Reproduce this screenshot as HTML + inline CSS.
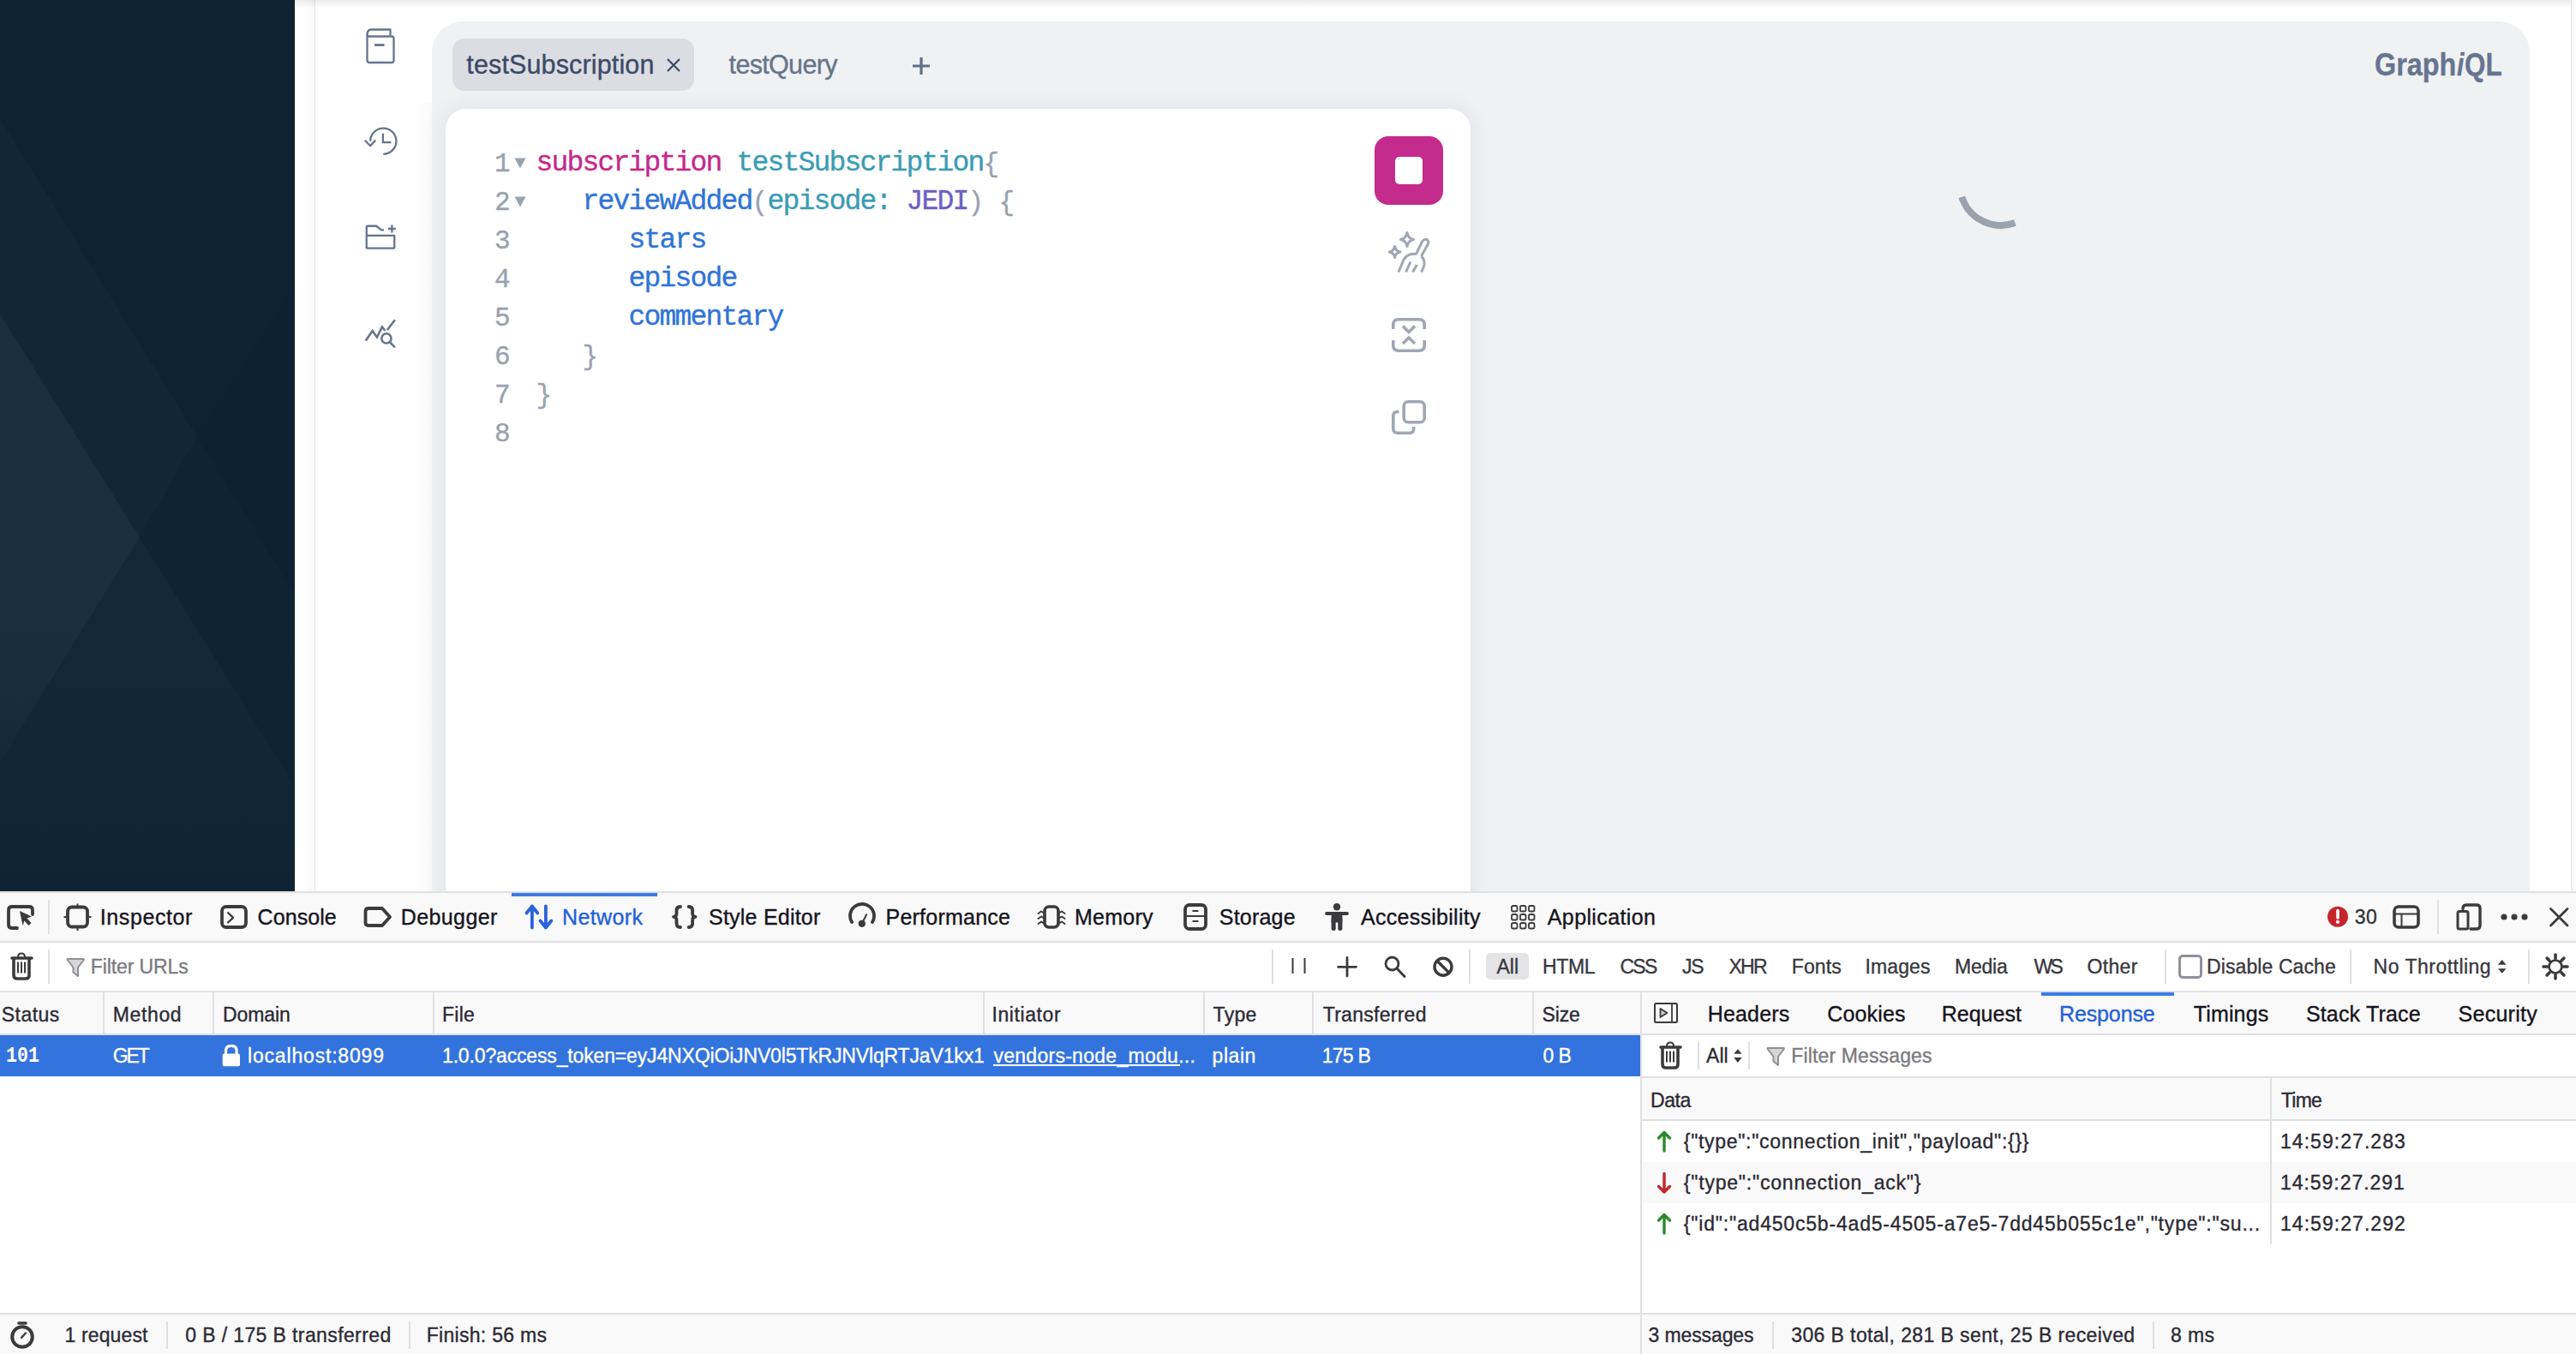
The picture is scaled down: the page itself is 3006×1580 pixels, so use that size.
<!DOCTYPE html>
<html><head><meta charset="utf-8"><style>
html,body{margin:0;padding:0;}
body{width:3006px;height:1580px;position:relative;overflow:hidden;background:#fff;font-family:'Liberation Sans',sans-serif;}
.t{position:absolute;white-space:pre;-webkit-text-stroke:0.35px currentColor;}
svg{overflow:visible}
</style></head><body>
<svg style="position:absolute;left:0;top:0" width="344" height="1040" viewBox="0 0 344 1040">
<defs><linearGradient id="dk" x1="0" y1="0" x2="0" y2="1"><stop offset="0" stop-color="#0f2334"/><stop offset="1" stop-color="#0f2334"/></linearGradient>
<linearGradient id="fade" x1="0" y1="0" x2="0" y2="1"><stop offset="0.3" stop-color="#0e2232" stop-opacity="0"/><stop offset="1" stop-color="#0e2232" stop-opacity="0.85"/></linearGradient></defs>
<rect width="344" height="1040" fill="#0f2435"/>
<polygon points="0,0 344,0 344,693 0,138" fill="#0e2232"/>
<polygon points="0,138 344,693 344,917 0,366" fill="#112636"/>
<polygon points="344,333 344,693 230,510" fill="#0e2132"/>
<polygon points="0,366 163,627 0,890" fill="#1a2f3e"/>
<polygon points="0,890 163,627 344,917 344,1040 0,1040" fill="#142937"/>
<polygon points="230,510 344,693 344,917 163,627" fill="#0f2433"/>
<rect y="600" width="344" height="440" fill="url(#fade)"/>
</svg>
<div style="position:absolute;left:344px;top:0px;width:23px;height:1040px;background:linear-gradient(90deg,#ffffff 40%,#f8f8f8);"></div>
<div style="position:absolute;left:367px;top:0px;width:1px;height:1040px;background:#e6e6e6;"></div>
<div style="position:absolute;left:344px;top:0px;width:2662px;height:10px;background:linear-gradient(#00000012,#00000000);"></div>
<div style="position:absolute;left:3000px;top:0px;width:1px;height:1040px;background:#e6e6e6;"></div>
<div style="position:absolute;left:3001px;top:0px;width:5px;height:1040px;background:linear-gradient(90deg,#f3f3f3,#fdfdfd);"></div>
<div style="position:absolute;left:484px;top:120px;width:20px;height:920px;background:linear-gradient(90deg,rgba(0,0,0,0),rgba(0,0,0,0.025));"></div>
<div style="position:absolute;left:504px;top:25px;width:2448px;height:1100px;background:#f0f1f3;border-radius:36px;"></div>
<div style="position:absolute;left:528px;top:45px;width:282px;height:61px;background:#dcdde2;border-radius:14px;"></div>
<svg style="position:absolute;left:778px;top:68px;" width="16" height="16" viewBox="0 0 16 16" fill="none"><path d="M1 1L15 15M15 1L1 15" stroke="#3b4a68" stroke-width="2.2"/></svg>
<svg style="position:absolute;left:1065px;top:67px;" width="20" height="20" viewBox="0 0 20 20" fill="none"><path d="M10 0V20M0 10H20" stroke="#616e86" stroke-width="3.2"/></svg>
<svg style="position:absolute;left:2280px;top:160px" width="110" height="110" viewBox="2280 160 110 110" fill="none">
<path d="M 2289.3 229.9 A 48 48 0 0 0 2351.4 260.1" stroke="#9aa1af" stroke-width="8"/></svg>
<div style="position:absolute;left:520px;top:127px;width:1196px;height:1000px;background:#ffffff;border-radius:24px;box-shadow:0 0 24px rgba(59,74,104,0.10);"></div>
<svg style="position:absolute;left:600px;top:183px;" width="14" height="14" viewBox="0 0 14 14" fill="none"><path d="M0.5 1.5H13.5L7 13.5Z" fill="#9aa1ae"/></svg>
<svg style="position:absolute;left:600px;top:228px;" width="14" height="14" viewBox="0 0 14 14" fill="none"><path d="M0.5 1.5H13.5L7 13.5Z" fill="#9aa1ae"/></svg>
<div style="position:absolute;left:1604px;top:159px;width:80px;height:80px;background:#c42b8c;border-radius:16px;"></div>
<div style="position:absolute;left:1628px;top:183px;width:32px;height:32px;background:#ffffff;border-radius:5px;"></div>
<svg style="position:absolute;left:1610px;top:260px;" width="80" height="80" viewBox="0 0 80 80" fill="none"><g stroke="#a0a6b3" stroke-width="3" stroke-linejoin="round" stroke-linecap="butt">
<path d="M32 11.5 Q33.2 18.3 39.5 19.5 Q33.2 20.7 32 27.5 Q30.8 20.7 24.5 19.5 Q30.8 18.3 32 11.5Z"/>
<path d="M17.6 27.5 Q18.6 33 24 34 Q18.6 35 17.6 40.5 Q16.6 35 11.2 34 Q16.6 33 17.6 27.5Z"/>
<path d="M42.5 36.5 L49.5 22 Q52 18.5 55 19.5 Q57.5 21 56.5 24.5 L48.5 39"/>
<path d="M42.5 36.5 Q37 35.5 32 38.5 Q29.5 40.5 28 43 L22 57.5"/>
<path d="M48.5 39 Q52.5 42.5 52 48.5 Q51.5 52.5 48.5 57.5"/>
<path d="M36 45.5 L30.5 57.5 M43.5 49 L38.5 57.5"/></g></svg>
<svg style="position:absolute;left:1624px;top:371px;" width="40" height="40" viewBox="0 0 40 40" fill="none"><g stroke="#a0a6b3" stroke-width="3.6" fill="none">
<path d="M1.8 13V8Q1.8 1.8 8 1.8H32Q38.2 1.8 38.2 8V13"/>
<path d="M1.8 26V32Q1.8 38.2 8 38.2H32Q38.2 38.2 38.2 32V26"/>
<path d="M13 9.5L20 16.5L27 9.5M13 30L20 23L27 30"/></g></svg>
<svg style="position:absolute;left:1624px;top:467px;" width="40" height="40" viewBox="0 0 40 40" fill="none"><g stroke="#a0a6b3" stroke-width="3.6" fill="none">
<rect x="14.2" y="1.8" width="24" height="24" rx="5"/>
<path d="M8.5 13.5H6.5Q1.8 13.5 1.8 18.5V33Q1.8 38.2 7 38.2H21Q25.6 38.2 25.6 33.5V31"/></g></svg>
<svg style="position:absolute;left:426px;top:33px;" width="36" height="42" viewBox="0 0 36 42" fill="none"><g stroke="#66748c" stroke-width="2.3" fill="none" stroke-linejoin="round">
<path d="M2.5 8 Q2.5 1.5 7 1.5 H29.5 V8.5"/>
<path d="M2.5 8 Q2.5 9.5 5 9.5 H31 Q33.5 9.5 33.5 12 V37.5 Q33.5 40 31 40 H5 Q2.5 40 2.5 37.5 Z"/>
<path d="M11 19.5H22.5" stroke-width="2.8"/></g></svg>
<svg style="position:absolute;left:424px;top:147px;" width="40" height="36" viewBox="0 0 40 36" fill="none"><g stroke="#66748c" stroke-width="2.3" fill="none">
<path d="M8.2 17.7 A15.1 15.1 0 1 1 23.3 32.8"/>
<path d="M1.8 16.8 L8.1 23.2 L14.2 16.6"/>
<path d="M22.9 8.8V19.2H32.5"/></g></svg>
<svg style="position:absolute;left:426px;top:262px;" width="37" height="30" viewBox="0 0 37 30" fill="none"><g stroke="#66748c" stroke-width="2.3" fill="none" stroke-linejoin="round">
<path d="M1.75 27.65V3.2Q1.75 1.75 3.2 1.75H13.2L19 6.3H22"/>
<path d="M1.75 12.8H34.25V26.2Q34.25 27.65 32.8 27.65H3.2Q1.75 27.65 1.75 26.2"/>
<path d="M31.4 0.6V9.4M27 5H35.8"/></g></svg>
<svg style="position:absolute;left:426px;top:372px;" width="37" height="35" viewBox="0 0 37 35" fill="none"><g stroke="#66748c" stroke-width="2.6" fill="none">
<path d="M0.8 25.6L8.6 14L13.9 21.5L19.9 9.5L23.5 14"/>
<path d="M25.9 13L34.9 1.2"/>
<circle cx="24.9" cy="22.9" r="5.6"/>
<path d="M29 27.3L34.9 33.4"/></g></svg>
<div style="position:absolute;left:0px;top:1040px;width:3006px;height:540px;background:#ffffff;"></div>
<div style="position:absolute;left:0px;top:1040px;width:3006px;height:2px;background:#e0e0e2;"></div>
<div style="position:absolute;left:0px;top:1042px;width:3006px;height:56px;background:#f9f9fa;"></div>
<div style="position:absolute;left:0px;top:1098px;width:3006px;height:2px;background:#e0e0e2;"></div>
<div style="position:absolute;left:0px;top:1156px;width:3006px;height:2px;background:#e0e0e2;"></div>
<div style="position:absolute;left:0px;top:1158px;width:3006px;height:48px;background:#f9f9fa;"></div>
<div style="position:absolute;left:0px;top:1206px;width:3006px;height:2px;background:#e0e0e2;"></div>
<div style="position:absolute;left:0px;top:1208px;width:1914px;height:48px;background:#3373dd;"></div>
<div style="position:absolute;left:0px;top:1532px;width:3006px;height:2px;background:#e0e0e2;"></div>
<div style="position:absolute;left:0px;top:1534px;width:3006px;height:46px;background:#f9f9fa;"></div>
<div style="position:absolute;left:1914px;top:1158px;width:2px;height:422px;background:#e0e0e2;"></div>
<div style="position:absolute;left:1916px;top:1208px;width:1090px;height:48px;background:#ffffff;"></div>
<div style="position:absolute;left:1916px;top:1256px;width:1090px;height:2px;background:#e0e0e2;"></div>
<div style="position:absolute;left:1916px;top:1258px;width:1090px;height:48px;background:#f9f9fa;"></div>
<div style="position:absolute;left:1916px;top:1306px;width:1090px;height:2px;background:#e0e0e2;"></div>
<div style="position:absolute;left:1916px;top:1356px;width:1090px;height:48px;background:#f9f9fa;"></div>
<div style="position:absolute;left:2649px;top:1258px;width:2px;height:194px;background:#e0e0e2;"></div>
<div style="position:absolute;left:1916px;top:1532px;width:1090px;height:2px;background:#e0e0e2;"></div>
<div style="position:absolute;left:1916px;top:1534px;width:1090px;height:46px;background:#f9f9fa;"></div>
<div style="position:absolute;left:120px;top:1158px;width:2px;height:48px;background:#e0e0e2;"></div>
<div style="position:absolute;left:248px;top:1158px;width:2px;height:48px;background:#e0e0e2;"></div>
<div style="position:absolute;left:505px;top:1158px;width:2px;height:48px;background:#e0e0e2;"></div>
<div style="position:absolute;left:1147px;top:1158px;width:2px;height:48px;background:#e0e0e2;"></div>
<div style="position:absolute;left:1404px;top:1158px;width:2px;height:48px;background:#e0e0e2;"></div>
<div style="position:absolute;left:1531px;top:1158px;width:2px;height:48px;background:#e0e0e2;"></div>
<div style="position:absolute;left:1788px;top:1158px;width:2px;height:48px;background:#e0e0e2;"></div>
<div style="position:absolute;left:56px;top:1050px;width:2px;height:40px;background:#e0e0e2;"></div>
<div style="position:absolute;left:2844px;top:1050px;width:2px;height:40px;background:#e0e0e2;"></div>
<div style="position:absolute;left:56px;top:1108px;width:2px;height:40px;background:#e0e0e2;"></div>
<div style="position:absolute;left:1484px;top:1108px;width:2px;height:40px;background:#e0e0e2;"></div>
<div style="position:absolute;left:1714px;top:1108px;width:2px;height:40px;background:#e0e0e2;"></div>
<div style="position:absolute;left:2526px;top:1108px;width:2px;height:40px;background:#e0e0e2;"></div>
<div style="position:absolute;left:2742px;top:1108px;width:2px;height:40px;background:#e0e0e2;"></div>
<div style="position:absolute;left:2950px;top:1108px;width:2px;height:40px;background:#e0e0e2;"></div>
<div style="position:absolute;left:1981px;top:1216px;width:2px;height:32px;background:#e0e0e2;"></div>
<div style="position:absolute;left:2040px;top:1216px;width:2px;height:32px;background:#e0e0e2;"></div>
<div style="position:absolute;left:194px;top:1542px;width:2px;height:32px;background:#e0e0e2;"></div>
<div style="position:absolute;left:477px;top:1542px;width:2px;height:32px;background:#e0e0e2;"></div>
<div style="position:absolute;left:2068px;top:1542px;width:2px;height:32px;background:#e0e0e2;"></div>
<div style="position:absolute;left:2512px;top:1542px;width:2px;height:32px;background:#e0e0e2;"></div>
<div style="position:absolute;left:597px;top:1042px;width:170px;height:4px;background:#3a7be8;"></div>
<div style="position:absolute;left:2382px;top:1158px;width:155px;height:4px;background:#3a7be8;"></div>
<div style="position:absolute;left:1734px;top:1112px;width:50px;height:31px;background:#e4e4e6;border-radius:5px;"></div>
<div style="position:absolute;left:1159px;top:1242px;width:218px;height:2px;background:#ffffff;"></div>
<svg style="position:absolute;left:0;top:0" width="3006" height="1580" viewBox="0 0 3006 1580">
<g fill="none" stroke="#3b3b3d" stroke-linecap="round" stroke-linejoin="round">
<!-- picker -->
<path d="M20 1083 H14 Q10 1083 10 1079 V1062 Q10 1058 14 1058 H34 Q38 1058 38 1062 V1067" stroke-width="3.8"/>
<!-- inspector -->
<rect x="79" y="1058.5" width="23" height="23" rx="5" stroke-width="3.8"/>
<path d="M90.5 1054.5V1058.5M90.5 1081.5V1086M74.5 1070H79M102 1070H106.5" stroke-width="2" stroke-linecap="butt"/>
<!-- console -->
<rect x="259" y="1058" width="28" height="24" rx="5" stroke-width="3.8"/>
<path d="M265.5 1064.5L272 1070.8L265.5 1077" stroke-width="2.4" stroke-linecap="butt"/>
<!-- debugger -->
<path d="M430 1060 H446 L455 1070 L446 1080 H430 Q426.5 1080 426.5 1076.5 V1063.5 Q426.5 1060 430 1060Z" stroke-width="3.8"/>
<!-- style editor braces -->
<path d="M794 1058 Q789.5 1058 789.5 1062.5 V1066 Q789.5 1069.8 786 1069.8 Q789.5 1069.8 789.5 1073.6 V1077.5 Q789.5 1082 794 1082" stroke-width="3.8"/>
<path d="M803.6 1058 Q808.1 1058 808.1 1062.5 V1066 Q808.1 1069.8 811.6 1069.8 Q808.1 1069.8 808.1 1073.6 V1077.5 Q808.1 1082 803.6 1082" stroke-width="3.8"/>
<!-- performance -->
<path d="M994 1076 A14 14 0 1 1 1018 1076" stroke-width="3.8"/>
<path d="M1005.8 1077.5 L1011.5 1066.5" stroke-width="2" stroke-linecap="butt"/>
<!-- memory -->
<rect x="1219" y="1058" width="16" height="24" rx="5" stroke-width="3.7"/>
<path d="M1211.5 1066 L1215 1063.5 L1217.5 1065 M1211.5 1072 L1215 1069.5 L1217.5 1071 M1211.5 1078 L1215 1075.5 L1217.5 1077" stroke-width="2"/>
<path d="M1242.5 1066 L1239 1063.5 L1236.5 1065 M1242.5 1072 L1239 1069.5 L1236.5 1071 M1242.5 1078 L1239 1075.5 L1236.5 1077" stroke-width="2"/>
<!-- storage -->
<rect x="1383" y="1056" width="24" height="28" rx="5" stroke-width="3.8"/>
<path d="M1383 1069H1407" stroke-width="2.2"/>
<path d="M1391.5 1063H1398.5M1391.5 1075H1398.5" stroke-width="2.2" stroke-linecap="butt"/>
<!-- accessibility -->
<path d="M1548 1066H1572" stroke-width="3.8"/>
<!-- application grid -->
<g stroke-width="1.8">
<rect x="1764" y="1057" width="6.5" height="6.5" rx="1.8"/><rect x="1774" y="1057" width="6.5" height="6.5" rx="1.8"/><rect x="1784" y="1057" width="6.5" height="6.5" rx="1.8"/>
<rect x="1764" y="1067" width="6.5" height="6.5" rx="1.8"/><rect x="1774" y="1067" width="6.5" height="6.5" rx="1.8"/><rect x="1784" y="1067" width="6.5" height="6.5" rx="1.8"/>
<rect x="1764" y="1077" width="6.5" height="6.5" rx="1.8"/><rect x="1774" y="1077" width="6.5" height="6.5" rx="1.8"/><rect x="1784" y="1077" width="6.5" height="6.5" rx="1.8"/>
</g>
<!-- layout icon -->
<rect x="2794" y="1058" width="28" height="24" rx="5" stroke-width="3.6"/>
<path d="M2794 1066.5H2822M2802.5 1066.5V1082" stroke-width="2"/>
<!-- responsive -->
<path d="M2874 1060.5 Q2874 1056 2878 1056 H2890 Q2894 1056 2894 1060 V1080 Q2894 1084 2890 1084 H2883" stroke-width="3.4"/>
<rect x="2868" y="1063.5" width="12" height="20.5" rx="2" stroke-width="3"/>
<!-- close -->
<path d="M2976.5 1060.5L2996 1080M2996 1060.5L2976.5 1080" stroke-width="2.8"/>
<!-- trash left -->
<path d="M14 1118 H37" stroke-width="3.6"/>
<path d="M21 1117 Q21 1112.5 25 1112.5 Q29 1112.5 29 1117" stroke-width="2"/>
<path d="M16 1119 V1138 Q16 1142 20 1142 H30 Q34 1142 34 1138 V1119" stroke-width="3.6"/>
<path d="M21 1122.5V1135.5M25 1122.5V1135.5M29 1122.5V1135.5" stroke-width="2" stroke-linecap="butt"/>
<!-- trash right -->
<path d="M1938 1222 H1961" stroke-width="3.6"/>
<path d="M1945 1221 Q1945 1216.5 1949 1216.5 Q1953 1216.5 1953 1221" stroke-width="2"/>
<path d="M1940 1223 V1242 Q1940 1246 1944 1246 H1954 Q1958 1246 1958 1242 V1223" stroke-width="3.6"/>
<path d="M1945 1226.5V1239.5M1949 1226.5V1239.5M1953 1226.5V1239.5" stroke-width="2" stroke-linecap="butt"/>
<!-- pause bars -->
<path d="M1508.5 1118V1136M1522.5 1118V1136" stroke-width="2" stroke-linecap="butt"/>
<!-- plus -->
<path d="M1572 1117.5V1139M1561.5 1128.3H1582.5" stroke-width="2.8"/>
<!-- search -->
<circle cx="1624.5" cy="1124.5" r="7.5" stroke-width="2.8"/>
<path d="M1630 1130L1639 1139.5" stroke-width="3"/>
<!-- block -->
<circle cx="1684" cy="1128.2" r="10" stroke-width="3.4"/>
<path d="M1677.3 1121.5L1690.7 1134.9" stroke-width="3.4"/>
<!-- checkbox -->
<rect x="2543.5" y="1115.5" width="25" height="25" rx="3.5" stroke="#8f8f9d" stroke-width="3"/>
<!-- gear -->
<circle cx="2982" cy="1128" r="7.5" stroke-width="2.7"/>
<path d="M2991.60 1128.00L2996.00 1128.00M2988.79 1134.79L2991.90 1137.90M2982.00 1137.60L2982.00 1142.00M2975.21 1134.79L2972.10 1137.90M2972.40 1128.00L2968.00 1128.00M2975.21 1121.21L2972.10 1118.10M2982.00 1118.40L2982.00 1114.00M2988.79 1121.21L2991.90 1118.10" stroke-width="3.6"/>
<!-- sidebar toggle -->
<rect x="1931" y="1171" width="26" height="22" rx="1.5" stroke-width="2"/>
<path d="M1951 1171V1193" stroke-width="1.8"/>
<path d="M1937.5 1177L1945.5 1182L1937.5 1187Z" fill="#c8c8c8" stroke-width="1.8"/>
<!-- stopwatch -->
<circle cx="26" cy="1560" r="11.8" stroke-width="4"/>
<path d="M22 1544H30" stroke-width="3.6"/>
<path d="M25 1561L30 1555.5" stroke-width="2.4"/>
<!-- filter icons -->
<path d="M79 1119 H97 Q98.5 1119 97.5 1120.5 L91 1129 V1139 L85.5 1134.5 V1129 L79 1120.5 Q78 1119 79 1119Z" stroke="#8f8f95" stroke-width="2" fill="#d6d6d6"/>
<path d="M2063 1223 H2081 Q2082.5 1223 2081.5 1224.5 L2075 1233 V1243 L2069.5 1238.5 V1233 L2063 1224.5 Q2062 1223 2063 1223Z" stroke="#8f8f95" stroke-width="2" fill="#d6d6d6"/>
</g>
<g fill="#3b3b3d">
<path d="M23 1063 L37 1069.5 L31.5 1071.5 L36.5 1077 L33.5 1080 L28.5 1074.5 L26.5 1080Z"/>
<circle cx="1005.8" cy="1077.8" r="4.1"/>
<circle cx="1560" cy="1058.3" r="4.2"/>
<rect x="1553.6" y="1065" width="12.8" height="11.5"/><rect x="1553.6" y="1070" width="5.1" height="16" rx="2.5"/><rect x="1561.3" y="1070" width="5.1" height="16" rx="2.5"/>
<path d="M2915 1125.7 L2919.7 1120 L2924.5 1125.7Z M2915 1130.2 L2919.7 1135.8 L2924.5 1130.2Z"/>
<path d="M2023.2 1229.8 L2027.9 1224.2 L2032.6 1229.8Z M2023.2 1234 L2027.9 1240 L2032.6 1234Z"/>
<circle cx="2922" cy="1070" r="3.6"/><circle cx="2934" cy="1070" r="3.6"/><circle cx="2946" cy="1070" r="3.6"/>
</g>
<circle cx="2728" cy="1069.8" r="12" fill="#c5262d"/>
<path d="M2728 1062.5V1071" stroke="#fff" stroke-width="3.6" stroke-linecap="round"/>
<circle cx="2728" cy="1075.8" r="2.1" fill="#fff"/>
<!-- network arrows -->
<g stroke="#2a62d9" stroke-width="3.8" stroke-linecap="round" stroke-linejoin="round" fill="none">
<path d="M620.9 1057.5V1082.5M614.5 1065.5L620.9 1057.5L627.3 1065.5"/>
<path d="M636.9 1057.5V1082.5M630.5 1074.5L636.9 1082.5L643.3 1074.5"/>
</g>
<!-- message arrows -->
<g stroke-width="3.4" stroke-linecap="round" stroke-linejoin="round" fill="none">
<path d="M1942 1321.5V1343M1935.5 1328L1942 1321.5L1948.5 1328" stroke="#2b8a2b"/>
<path d="M1942 1369.5V1391M1935.5 1384.5L1942 1391L1948.5 1384.5" stroke="#c4252d"/>
<path d="M1942 1417.5V1439M1935.5 1424L1942 1417.5L1948.5 1424" stroke="#2b8a2b"/>
</g>
<!-- lock -->
<path d="M263.5 1230 V1226 Q263.5 1220.3 269.8 1220.3 Q276.1 1220.3 276.1 1226 V1230" stroke="#fff" stroke-width="3.2" fill="none"/>
<rect x="259.7" y="1229.5" width="20.3" height="14.8" rx="2" fill="#fff"/>
</svg>
<div class="t" style="left:544.30px;top:57.33px;font: 400 30.5px/37px 'Liberation Sans',sans-serif;color:#3b4a68;letter-spacing:0.138px;">testSubscription</div>
<div class="t" style="left:850.60px;top:57.33px;font: 400 30.5px/37px 'Liberation Sans',sans-serif;color:#66748c;letter-spacing:-0.671px;">testQuery</div>
<div class="t" style="left:2770.82px;top:53.67px;font: 700 37px/44px 'Liberation Sans',sans-serif;color:#66758f;transform:scaleX(0.8754);transform-origin:0 0;">Graph</div>
<div class="t" style="left:2866.90px;top:53.67px;font:italic 700 37px/44px 'Liberation Sans',sans-serif;color:#66758f;transform:scaleX(0.8091);transform-origin:0 0;">i</div>
<div class="t" style="left:2876.45px;top:53.67px;font: 700 37px/44px 'Liberation Sans',sans-serif;color:#66758f;transform:scaleX(0.8497);transform-origin:0 0;">QL</div>
<div class="t" style="left:576.90px;top:172.85px;font: 400 31px/37px 'Liberation Mono',sans-serif;color:#9aa1ae;letter-spacing:-0.603px;">1</div>
<div class="t" style="left:576.90px;top:217.85px;font: 400 31px/37px 'Liberation Mono',sans-serif;color:#9aa1ae;letter-spacing:-0.603px;">2</div>
<div class="t" style="left:576.90px;top:262.85px;font: 400 31px/37px 'Liberation Mono',sans-serif;color:#9aa1ae;letter-spacing:-0.603px;">3</div>
<div class="t" style="left:576.90px;top:307.85px;font: 400 31px/37px 'Liberation Mono',sans-serif;color:#9aa1ae;letter-spacing:-0.603px;">4</div>
<div class="t" style="left:576.90px;top:352.85px;font: 400 31px/37px 'Liberation Mono',sans-serif;color:#9aa1ae;letter-spacing:-0.603px;">5</div>
<div class="t" style="left:576.90px;top:397.85px;font: 400 31px/37px 'Liberation Mono',sans-serif;color:#9aa1ae;letter-spacing:-0.603px;">6</div>
<div class="t" style="left:576.90px;top:442.85px;font: 400 31px/37px 'Liberation Mono',sans-serif;color:#9aa1ae;letter-spacing:-0.603px;">7</div>
<div class="t" style="left:576.90px;top:487.85px;font: 400 31px/37px 'Liberation Mono',sans-serif;color:#9aa1ae;letter-spacing:-0.603px;">8</div>
<div class="t" style="left:625.50px;top:170.82px;font: 400 33px/40px 'Liberation Mono',sans-serif;color:#c5288c;letter-spacing:-1.803px;">subscription</div>
<div class="t" style="left:859.50px;top:170.82px;font: 400 33px/40px 'Liberation Mono',sans-serif;color:#3a9cb4;letter-spacing:-1.803px;">testSubscription</div>
<div class="t" style="left:1147.50px;top:172.85px;font: 400 31px/37px 'Liberation Mono',sans-serif;color:#9aa1ae;letter-spacing:-0.603px;">{</div>
<div class="t" style="left:679.50px;top:215.82px;font: 400 33px/40px 'Liberation Mono',sans-serif;color:#2f74d8;letter-spacing:-1.803px;">reviewAdded</div>
<div class="t" style="left:877.50px;top:217.85px;font: 400 31px/37px 'Liberation Mono',sans-serif;color:#9aa1ae;letter-spacing:-0.603px;">(</div>
<div class="t" style="left:895.50px;top:215.82px;font: 400 33px/40px 'Liberation Mono',sans-serif;color:#3a9cb4;letter-spacing:-1.803px;">episode:</div>
<div class="t" style="left:1057.50px;top:215.82px;font: 400 33px/40px 'Liberation Mono',sans-serif;color:#6b60c5;letter-spacing:-1.803px;">JEDI</div>
<div class="t" style="left:1129.50px;top:217.85px;font: 400 31px/37px 'Liberation Mono',sans-serif;color:#9aa1ae;letter-spacing:-0.603px;">)</div>
<div class="t" style="left:1165.50px;top:217.85px;font: 400 31px/37px 'Liberation Mono',sans-serif;color:#9aa1ae;letter-spacing:-0.603px;">{</div>
<div class="t" style="left:733.50px;top:260.82px;font: 400 33px/40px 'Liberation Mono',sans-serif;color:#2f74d8;letter-spacing:-1.803px;">stars</div>
<div class="t" style="left:733.50px;top:305.82px;font: 400 33px/40px 'Liberation Mono',sans-serif;color:#2f74d8;letter-spacing:-1.803px;">episode</div>
<div class="t" style="left:733.50px;top:350.82px;font: 400 33px/40px 'Liberation Mono',sans-serif;color:#2f74d8;letter-spacing:-1.803px;">commentary</div>
<div class="t" style="left:679.50px;top:397.85px;font: 400 31px/37px 'Liberation Mono',sans-serif;color:#9aa1ae;letter-spacing:-0.603px;">}</div>
<div class="t" style="left:625.50px;top:442.85px;font: 400 31px/37px 'Liberation Mono',sans-serif;color:#9aa1ae;letter-spacing:-0.603px;">}</div>
<div class="t" style="left:116.80px;top:1055.33px;font: 400 25px/30px 'Liberation Sans',sans-serif;color:#15141a;letter-spacing:0.587px;">Inspector</div>
<div class="t" style="left:300.60px;top:1055.33px;font: 400 25px/30px 'Liberation Sans',sans-serif;color:#15141a;letter-spacing:0.063px;">Console</div>
<div class="t" style="left:467.80px;top:1055.33px;font: 400 25px/30px 'Liberation Sans',sans-serif;color:#15141a;letter-spacing:0.389px;">Debugger</div>
<div class="t" style="left:656.00px;top:1055.33px;font: 400 25px/30px 'Liberation Sans',sans-serif;color:#2260d9;letter-spacing:0.385px;">Network</div>
<div class="t" style="left:827.00px;top:1055.33px;font: 400 25px/30px 'Liberation Sans',sans-serif;color:#15141a;letter-spacing:0.227px;">Style Editor</div>
<div class="t" style="left:1033.50px;top:1055.33px;font: 400 25px/30px 'Liberation Sans',sans-serif;color:#15141a;letter-spacing:0.229px;">Performance</div>
<div class="t" style="left:1254.00px;top:1055.33px;font: 400 25px/30px 'Liberation Sans',sans-serif;color:#15141a;letter-spacing:0.243px;">Memory</div>
<div class="t" style="left:1422.80px;top:1055.33px;font: 400 25px/30px 'Liberation Sans',sans-serif;color:#15141a;letter-spacing:0.207px;">Storage</div>
<div class="t" style="left:1588.00px;top:1055.33px;font: 400 25px/30px 'Liberation Sans',sans-serif;color:#15141a;letter-spacing:0.280px;">Accessibility</div>
<div class="t" style="left:1805.80px;top:1055.33px;font: 400 25px/30px 'Liberation Sans',sans-serif;color:#15141a;letter-spacing:0.380px;">Application</div>
<div class="t" style="left:2747.70px;top:1055.83px;font: 400 23px/28px 'Liberation Sans',sans-serif;color:#333336;letter-spacing:0.508px;">30</div>
<div class="t" style="left:105.80px;top:1113.93px;font: 400 23px/28px 'Liberation Sans',sans-serif;color:#7a7a80;letter-spacing:-0.101px;">Filter URLs</div>
<div class="t" style="left:1746.50px;top:1113.93px;font: 400 23px/28px 'Liberation Sans',sans-serif;color:#38383d;letter-spacing:0.025px;">All</div>
<div class="t" style="left:1800.00px;top:1113.93px;font: 400 23px/28px 'Liberation Sans',sans-serif;color:#38383d;letter-spacing:-0.339px;">HTML</div>
<div class="t" style="left:1890.40px;top:1113.93px;font: 400 23px/28px 'Liberation Sans',sans-serif;color:#38383d;letter-spacing:-1.675px;">CSS</div>
<div class="t" style="left:1963.00px;top:1113.93px;font: 400 23px/28px 'Liberation Sans',sans-serif;color:#38383d;letter-spacing:-1.200px;">JS</div>
<div class="t" style="left:2017.40px;top:1113.93px;font: 400 23px/28px 'Liberation Sans',sans-serif;color:#38383d;letter-spacing:-1.675px;">XHR</div>
<div class="t" style="left:2090.70px;top:1113.93px;font: 400 23px/28px 'Liberation Sans',sans-serif;color:#38383d;letter-spacing:0.144px;">Fonts</div>
<div class="t" style="left:2176.60px;top:1113.93px;font: 400 23px/28px 'Liberation Sans',sans-serif;color:#38383d;letter-spacing:0.095px;">Images</div>
<div class="t" style="left:2281.00px;top:1113.93px;font: 400 23px/28px 'Liberation Sans',sans-serif;color:#38383d;letter-spacing:-0.213px;">Media</div>
<div class="t" style="left:2373.60px;top:1113.93px;font: 400 23px/28px 'Liberation Sans',sans-serif;color:#38383d;letter-spacing:-2.708px;">WS</div>
<div class="t" style="left:2435.50px;top:1113.93px;font: 400 23px/28px 'Liberation Sans',sans-serif;color:#38383d;letter-spacing:0.334px;">Other</div>
<div class="t" style="left:2575.00px;top:1113.93px;font: 400 23px/28px 'Liberation Sans',sans-serif;color:#38383d;letter-spacing:0.101px;">Disable Cache</div>
<div class="t" style="left:2769.60px;top:1113.93px;font: 400 23px/28px 'Liberation Sans',sans-serif;color:#38383d;letter-spacing:0.485px;">No Throttling</div>
<div class="t" style="left:1.80px;top:1170.03px;font: 400 23px/28px 'Liberation Sans',sans-serif;color:#2b2a33;letter-spacing:0.439px;">Status</div>
<div class="t" style="left:131.80px;top:1170.03px;font: 400 23px/28px 'Liberation Sans',sans-serif;color:#2b2a33;letter-spacing:0.615px;">Method</div>
<div class="t" style="left:259.90px;top:1170.03px;font: 400 23px/28px 'Liberation Sans',sans-serif;color:#2b2a33;letter-spacing:-0.072px;">Domain</div>
<div class="t" style="left:516.00px;top:1170.03px;font: 400 23px/28px 'Liberation Sans',sans-serif;color:#2b2a33;letter-spacing:0.244px;">File</div>
<div class="t" style="left:1157.40px;top:1170.03px;font: 400 23px/28px 'Liberation Sans',sans-serif;color:#2b2a33;letter-spacing:0.604px;">Initiator</div>
<div class="t" style="left:1415.60px;top:1170.03px;font: 400 23px/28px 'Liberation Sans',sans-serif;color:#2b2a33;letter-spacing:0.309px;">Type</div>
<div class="t" style="left:1543.70px;top:1170.03px;font: 400 23px/28px 'Liberation Sans',sans-serif;color:#2b2a33;letter-spacing:0.277px;">Transferred</div>
<div class="t" style="left:1799.60px;top:1170.03px;font: 400 23px/28px 'Liberation Sans',sans-serif;color:#2b2a33;letter-spacing:-0.150px;">Size</div>
<div class="t" style="left:1992.70px;top:1168.33px;font: 400 25px/30px 'Liberation Sans',sans-serif;color:#15141a;letter-spacing:0.184px;">Headers</div>
<div class="t" style="left:2132.30px;top:1168.33px;font: 400 25px/30px 'Liberation Sans',sans-serif;color:#15141a;letter-spacing:0.147px;">Cookies</div>
<div class="t" style="left:2265.70px;top:1168.33px;font: 400 25px/30px 'Liberation Sans',sans-serif;color:#15141a;letter-spacing:0.022px;">Request</div>
<div class="t" style="left:2403.00px;top:1168.33px;font: 400 25px/30px 'Liberation Sans',sans-serif;color:#2260d9;letter-spacing:-0.124px;">Response</div>
<div class="t" style="left:2559.80px;top:1168.33px;font: 400 25px/30px 'Liberation Sans',sans-serif;color:#15141a;letter-spacing:0.136px;">Timings</div>
<div class="t" style="left:2690.90px;top:1168.33px;font: 400 25px/30px 'Liberation Sans',sans-serif;color:#15141a;letter-spacing:0.176px;">Stack Trace</div>
<div class="t" style="left:2868.50px;top:1168.33px;font: 400 25px/30px 'Liberation Sans',sans-serif;color:#15141a;letter-spacing:0.285px;">Security</div>
<div class="t" style="left:6.83px;top:1218.25px;font: 700 25px/30px 'Liberation Mono',sans-serif;color:#ffffff;-webkit-text-stroke:0;transform:scaleX(0.8650);transform-origin:0 0;">101</div>
<div class="t" style="left:131.80px;top:1217.73px;font: 400 23px/28px 'Liberation Sans',sans-serif;color:#ffffff;letter-spacing:-2.165px;">GET</div>
<div class="t" style="left:289.00px;top:1217.73px;font: 400 23px/28px 'Liberation Sans',sans-serif;color:#ffffff;letter-spacing:0.820px;">localhost:8099</div>
<div class="t" style="left:516.00px;top:1217.73px;font: 400 23px/28px 'Liberation Sans',sans-serif;color:#ffffff;letter-spacing:-0.154px;width:632px;overflow:hidden;">1.0.0?access_token=eyJ4NXQiOiJNV0l5TkRJNVlqRTJaV1kx1</div>
<div class="t" style="left:1159.40px;top:1217.73px;font: 400 23px/28px 'Liberation Sans',sans-serif;color:#ffffff;letter-spacing:0.281px;">vendors-node_modu...</div>
<div class="t" style="left:1414.60px;top:1217.73px;font: 400 23px/28px 'Liberation Sans',sans-serif;color:#ffffff;letter-spacing:0.549px;">plain</div>
<div class="t" style="left:1542.70px;top:1217.73px;font: 400 23px/28px 'Liberation Sans',sans-serif;color:#ffffff;letter-spacing:-0.716px;">175 B</div>
<div class="t" style="left:1800.60px;top:1217.73px;font: 400 23px/28px 'Liberation Sans',sans-serif;color:#ffffff;letter-spacing:-0.591px;">0 B</div>
<div class="t" style="left:1991.00px;top:1218.03px;font: 400 23px/28px 'Liberation Sans',sans-serif;color:#2b2a33;letter-spacing:0.075px;">All</div>
<div class="t" style="left:2090.30px;top:1218.03px;font: 400 23px/28px 'Liberation Sans',sans-serif;color:#7a7a80;letter-spacing:0.134px;">Filter Messages</div>
<div class="t" style="left:1926.00px;top:1270.03px;font: 400 23px/28px 'Liberation Sans',sans-serif;color:#2b2a33;letter-spacing:-0.464px;">Data</div>
<div class="t" style="left:2662.00px;top:1270.03px;font: 400 23px/28px 'Liberation Sans',sans-serif;color:#2b2a33;letter-spacing:-0.822px;">Time</div>
<div class="t" style="left:1964.80px;top:1318.03px;font: 400 23px/28px 'Liberation Sans',sans-serif;color:#2b2a33;letter-spacing:0.692px;">{"type":"connection_init","payload":{}}</div>
<div class="t" style="left:2661.00px;top:1318.03px;font: 400 23px/28px 'Liberation Sans',sans-serif;color:#2b2a33;letter-spacing:1.045px;">14:59:27.283</div>
<div class="t" style="left:1964.80px;top:1366.03px;font: 400 23px/28px 'Liberation Sans',sans-serif;color:#2b2a33;letter-spacing:0.790px;">{"type":"connection_ack"}</div>
<div class="t" style="left:2661.00px;top:1366.03px;font: 400 23px/28px 'Liberation Sans',sans-serif;color:#2b2a33;letter-spacing:0.954px;">14:59:27.291</div>
<div class="t" style="left:1964.80px;top:1414.03px;font: 400 23px/28px 'Liberation Sans',sans-serif;color:#2b2a33;letter-spacing:0.810px;">{"id":"ad450c5b-4ad5-4505-a7e5-7dd45b055c1e","type":"su...</div>
<div class="t" style="left:2661.00px;top:1414.03px;font: 400 23px/28px 'Liberation Sans',sans-serif;color:#2b2a33;letter-spacing:1.045px;">14:59:27.292</div>
<div class="t" style="left:75.50px;top:1544.03px;font: 400 23px/28px 'Liberation Sans',sans-serif;color:#2b2a33;letter-spacing:0.137px;">1 request</div>
<div class="t" style="left:216.20px;top:1544.03px;font: 400 23px/28px 'Liberation Sans',sans-serif;color:#2b2a33;letter-spacing:0.390px;">0 B / 175 B transferred</div>
<div class="t" style="left:497.80px;top:1544.03px;font: 400 23px/28px 'Liberation Sans',sans-serif;color:#2b2a33;letter-spacing:0.278px;">Finish: 56 ms</div>
<div class="t" style="left:1923.60px;top:1544.03px;font: 400 23px/28px 'Liberation Sans',sans-serif;color:#2b2a33;letter-spacing:-0.123px;">3 messages</div>
<div class="t" style="left:2090.20px;top:1544.03px;font: 400 23px/28px 'Liberation Sans',sans-serif;color:#2b2a33;letter-spacing:0.401px;">306 B total, 281 B sent, 25 B received</div>
<div class="t" style="left:2533.00px;top:1544.03px;font: 400 23px/28px 'Liberation Sans',sans-serif;color:#2b2a33;letter-spacing:0.386px;">8 ms</div>
</body></html>
